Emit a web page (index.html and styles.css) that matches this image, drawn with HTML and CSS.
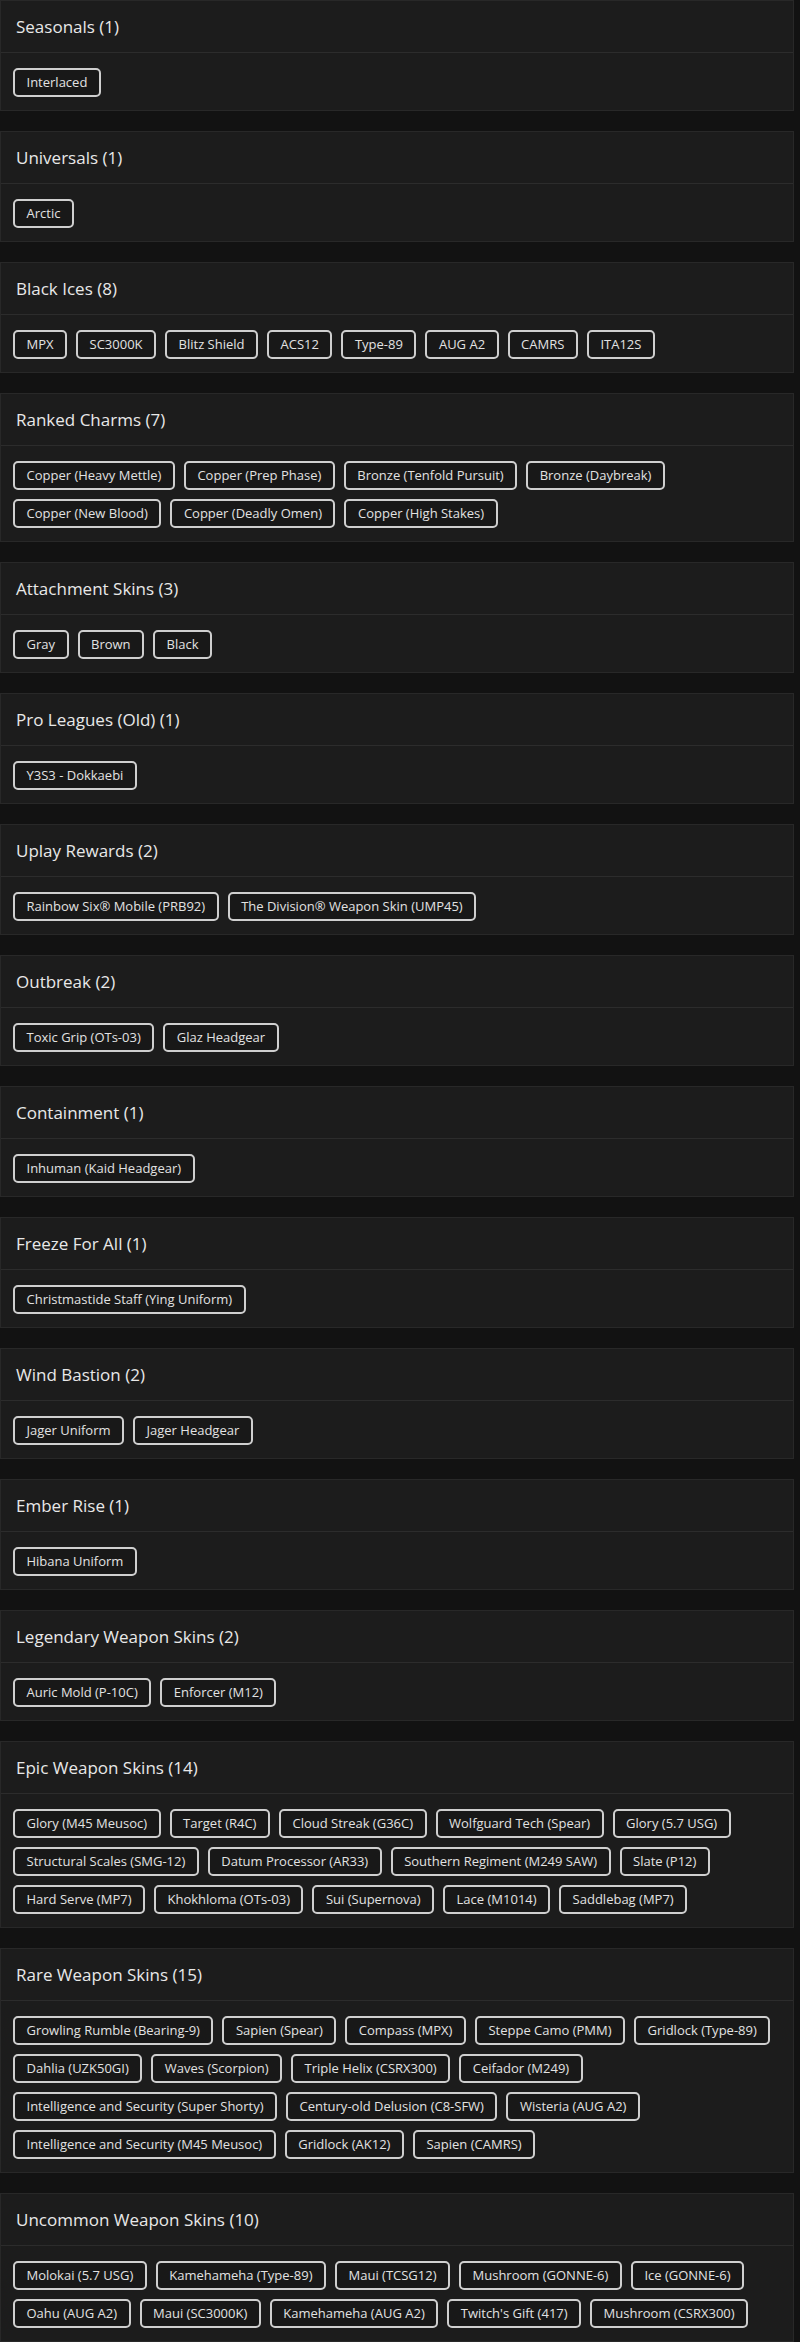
FILE: index.html
```html
<!DOCTYPE html>
<html lang="en">
<head>
<meta charset="utf-8">
<title>Items</title>
<link rel="stylesheet" href="styles.css">
</head>
<body>
<main class="page">
  <section class="card"><h2 class="card-header">Seasonals (1)</h2><div class="card-body"><span class="tag">Interlaced</span></div></section>
  <section class="card"><h2 class="card-header">Universals (1)</h2><div class="card-body"><span class="tag">Arctic</span></div></section>
  <section class="card"><h2 class="card-header">Black Ices (8)</h2><div class="card-body"><span class="tag">MPX</span><span class="tag">SC3000K</span><span class="tag">Blitz Shield</span><span class="tag">ACS12</span><span class="tag">Type-89</span><span class="tag">AUG A2</span><span class="tag">CAMRS</span><span class="tag">ITA12S</span></div></section>
  <section class="card"><h2 class="card-header">Ranked Charms (7)</h2><div class="card-body"><span class="tag">Copper (Heavy Mettle)</span><span class="tag">Copper (Prep Phase)</span><span class="tag">Bronze (Tenfold Pursuit)</span><span class="tag">Bronze (Daybreak)</span><span class="tag">Copper (New Blood)</span><span class="tag">Copper (Deadly Omen)</span><span class="tag">Copper (High Stakes)</span></div></section>
  <section class="card"><h2 class="card-header">Attachment Skins (3)</h2><div class="card-body"><span class="tag">Gray</span><span class="tag">Brown</span><span class="tag">Black</span></div></section>
  <section class="card"><h2 class="card-header">Pro Leagues (Old) (1)</h2><div class="card-body"><span class="tag">Y3S3 - Dokkaebi</span></div></section>
  <section class="card"><h2 class="card-header">Uplay Rewards (2)</h2><div class="card-body"><span class="tag">Rainbow Six® Mobile (PRB92)</span><span class="tag">The Division® Weapon Skin (UMP45)</span></div></section>
  <section class="card"><h2 class="card-header">Outbreak (2)</h2><div class="card-body"><span class="tag">Toxic Grip (OTs-03)</span><span class="tag">Glaz Headgear</span></div></section>
  <section class="card"><h2 class="card-header">Containment (1)</h2><div class="card-body"><span class="tag">Inhuman (Kaid Headgear)</span></div></section>
  <section class="card"><h2 class="card-header">Freeze For All (1)</h2><div class="card-body"><span class="tag">Christmastide Staff (Ying Uniform)</span></div></section>
  <section class="card"><h2 class="card-header">Wind Bastion (2)</h2><div class="card-body"><span class="tag">Jager Uniform</span><span class="tag">Jager Headgear</span></div></section>
  <section class="card"><h2 class="card-header">Ember Rise (1)</h2><div class="card-body"><span class="tag">Hibana Uniform</span></div></section>
  <section class="card"><h2 class="card-header">Legendary Weapon Skins (2)</h2><div class="card-body"><span class="tag">Auric Mold (P-10C)</span><span class="tag">Enforcer (M12)</span></div></section>
  <section class="card"><h2 class="card-header">Epic Weapon Skins (14)</h2><div class="card-body"><span class="tag">Glory (M45 Meusoc)</span><span class="tag">Target (R4C)</span><span class="tag">Cloud Streak (G36C)</span><span class="tag">Wolfguard Tech (Spear)</span><span class="tag">Glory (5.7 USG)</span><span class="tag">Structural Scales (SMG-12)</span><span class="tag">Datum Processor (AR33)</span><span class="tag">Southern Regiment (M249 SAW)</span><span class="tag">Slate (P12)</span><span class="tag">Hard Serve (MP7)</span><span class="tag">Khokhloma (OTs-03)</span><span class="tag">Sui (Supernova)</span><span class="tag">Lace (M1014)</span><span class="tag">Saddlebag (MP7)</span></div></section>
  <section class="card"><h2 class="card-header">Rare Weapon Skins (15)</h2><div class="card-body"><span class="tag">Growling Rumble (Bearing-9)</span><span class="tag">Sapien (Spear)</span><span class="tag">Compass (MPX)</span><span class="tag">Steppe Camo (PMM)</span><span class="tag">Gridlock (Type-89)</span><span class="tag">Dahlia (UZK50GI)</span><span class="tag">Waves (Scorpion)</span><span class="tag">Triple Helix (CSRX300)</span><span class="tag">Ceifador (M249)</span><span class="tag">Intelligence and Security (Super Shorty)</span><span class="tag">Century-old Delusion (C8-SFW)</span><span class="tag">Wisteria (AUG A2)</span><span class="tag">Intelligence and Security (M45 Meusoc)</span><span class="tag">Gridlock (AK12)</span><span class="tag">Sapien (CAMRS)</span></div></section>
  <section class="card"><h2 class="card-header">Uncommon Weapon Skins (10)</h2><div class="card-body"><span class="tag">Molokai (5.7 USG)</span><span class="tag">Kamehameha (Type-89)</span><span class="tag">Maui (TCSG12)</span><span class="tag">Mushroom (GONNE-6)</span><span class="tag">Ice (GONNE-6)</span><span class="tag">Oahu (AUG A2)</span><span class="tag">Maui (SC3000K)</span><span class="tag">Kamehameha (AUG A2)</span><span class="tag">Twitch's Gift (417)</span><span class="tag">Mushroom (CSRX300)</span></div></section>
</main>
</body>
</html>
```

FILE: styles.css
```css
html, body {
  margin: 0;
  padding: 0;
  background: #121212;
}

body {
  font-family: "Open Sans", "Noto Sans", "Liberation Sans", sans-serif;
  color: #e4e4e4;
}

.page {
  width: 794px;
}

.card {
  background: #1c1c1c;
  border: 1px solid #282828;
  margin: 0 0 20px 0;
}

.card-header {
  margin: 0;
  padding: 12px 15px;
  font-size: 17px;
  font-weight: 500;
  line-height: 27px;
  color: #e8e8e8;
  border-bottom: 1px solid #2c2c2c;
}

.card-body {
  display: flex;
  flex-wrap: wrap;
  gap: 9px;
  padding: 15px 12px 13px;
}

.tag {
  display: inline-block;
  padding: 4px 11.5px;
  font-size: 13px;
  line-height: 17px;
  color: #e2e2e2;
  background: #181818;
  border: 2px solid #cfcfcf;
  border-radius: 5px;
  white-space: nowrap;
}
```
